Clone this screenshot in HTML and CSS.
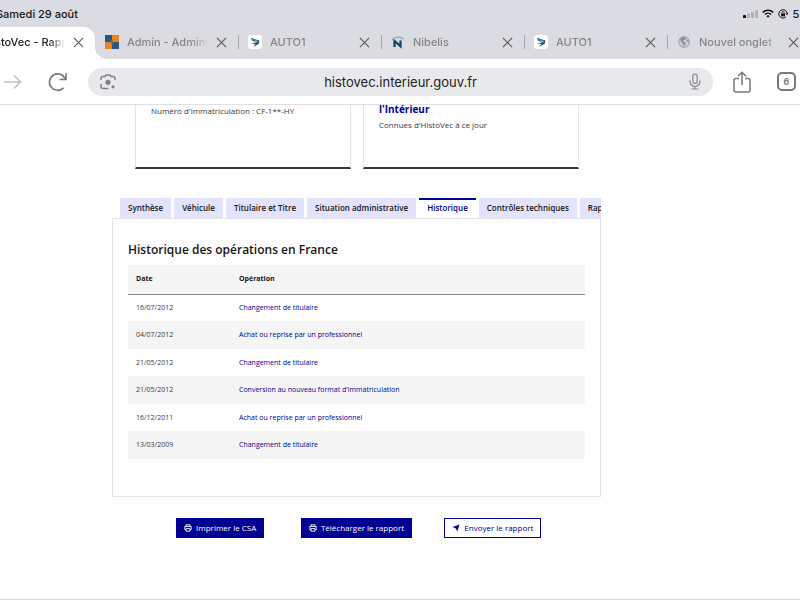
FILE: index.html
```html
<!DOCTYPE html>
<html lang="fr">
<head>
  <meta charset="UTF-8" />
  <meta name="viewport" content="width=device-width, initial-scale=1.0"/>
  <title>HistoVec - Rapport</title>
  <link rel="stylesheet" href="styles.css">
</head>
<body>
  <svg class="defs" aria-hidden="true">
    <symbol id="close" viewBox="0 0 12 12"><path d="M1 1l10 10M11 1L1 11" fill="none" stroke="#5b5c61" stroke-width="1.3"/></symbol>
    <symbol id="auto" viewBox="0 0 14 14"><rect width="14" height="14" rx="3" fill="#fff"/><path d="M3 2.500l3 1.500 5.500 1.500-1 3.500L5 12l2.500-3L3 8.500l5-1L4 5.500z" fill="#215273"/><path d="M3 3l2 2 5 1" fill="none" stroke="#3b9bd0" stroke-width=".8"/><path d="M6.500 6.300l3 .5" stroke="#fff" stroke-width=".7"/></symbol>
    <symbol id="printer" viewBox="0 0 8 8"><path d="M2 2.300V.8h4v1.500M2 5.700H.8V2.500h6.400v3.200H6M2 4.600h4v2.600H2z" fill="none" stroke="currentColor" stroke-width=".9"/></symbol>
  </svg>

  <header class="browser">
    <div class="status">
      <span>Samedi 29 août</span>
      <div class="status-icons">
        <svg width="15" height="8" viewBox="0 0 15 8"><rect y="5" width="3" height="3" rx=".6" fill="#111"/><g fill="#b3b4ba"><rect x="4" y="3.500" width="3" height="4.500" rx=".6"/><rect x="8" y="2" width="3" height="6" rx=".6"/><rect x="12" width="3" height="8" rx=".6"/></g></svg>
        <svg width="12" height="9" viewBox="0 0 12 9"><path d="M.8 3.400a7.500 7.500 0 0 1 10.400 0M2.800 5.500a4.600 4.600 0 0 1 6.400 0" fill="none" stroke="#111" stroke-width="1.500"/><path d="M6 8.800L4.300 7a2.500 2.500 0 0 1 3.400 0z" fill="#111"/></svg>
        <svg width="10" height="10" viewBox="0 0 10 10"><path d="M7.800 8A4.200 4.200 0 1 1 9.200 5M7.800 4.400l1.300 1.200L10 4" fill="none" stroke="#111"/><rect x="3" y="4.500" width="4" height="2.800" fill="#111"/><path d="M3.800 4.500v-.8a1.200 1.200 0 0 1 2.400 0v.8" fill="none" stroke="#111" stroke-width=".8"/></svg>
        <span>52</span>
      </div>
    </div>

    <div class="strip">
      <div class="tab active">
        <span class="favicon"></span>
        <span class="tab-title">HistoVec - Rapport</span>
        <button class="close" aria-label="Fermer"><svg><use href="#close"/></svg></button>
      </div>
      <div class="tab">
        <svg class="favicon" viewBox="0 0 14 14"><path d="M0 0h7v7H0zM7 7h7v7H7z" fill="#205a84"/><path d="M7 0h7v7H7zM0 7h7v7H0z" fill="#ed8424"/><path d="M5.500 5.500h3v3h-3z" fill="#8a684c"/></svg>
        <span class="tab-title">Admin - Administration</span>
        <button class="close" aria-label="Fermer"><svg><use href="#close"/></svg></button>
      </div>
      <div class="tab">
        <svg class="favicon"><use href="#auto"/></svg>
        <span class="tab-title">AUTO1</span>
        <button class="close" aria-label="Fermer"><svg><use href="#close"/></svg></button>
      </div>
      <div class="tab">
        <svg class="favicon" viewBox="0 0 14 14"><path d="M3.500 12V6l6 5.300V5.500" fill="none" stroke="#174565" stroke-width="2.300"/><path d="M1 4.800Q7-.2 12.500 4.200" fill="none" stroke="#56b8c5" stroke-width="1.300"/></svg>
        <span class="tab-title">Nibelis</span>
        <button class="close" aria-label="Fermer"><svg><use href="#close"/></svg></button>
      </div>
      <div class="tab">
        <svg class="favicon"><use href="#auto"/></svg>
        <span class="tab-title">AUTO1</span>
        <button class="close" aria-label="Fermer"><svg><use href="#close"/></svg></button>
      </div>
      <div class="tab">
        <svg class="favicon" viewBox="0 0 14 14"><circle cx="7" cy="7" r="5.300" fill="#cdd2d8" stroke="#92999f"/><path d="M3 4l3-2 3 1-1 2-2 .5 1 1.500 2 .5-1 2.500-1.500 1.500L6 8.500 4 7zM10 4l2 2-1 1-1.500-1z" fill="#8a929a"/></svg>
        <span class="tab-title">Nouvel onglet</span>
        <button class="close" aria-label="Fermer"><svg><use href="#close"/></svg></button>
      </div>
    </div>

    <div class="toolbar">
      <button class="forward" aria-label="Suivant"><svg width="18" height="16" viewBox="0 0 18 16"><path d="M0 8h16M10 1.500L16.500 8 10 14.500" fill="none" stroke="#bfc0c3" stroke-width="1.600"/></svg></button>
      <button class="reload" aria-label="Actualiser"><svg width="20" height="20" viewBox="0 0 20 20"><path d="M15.500 15.800A8.200 8.200 0 1 1 17 6.500M18 1.200v6.300h-6.300" fill="none" stroke="#77787c" stroke-width="1.700"/></svg></button>
      <div class="address">
        <svg width="16" height="16" viewBox="0 0 16 16"><path d="M1 6V4.500A2 2 0 0 1 3 2.600h2L6 1h4l1 1.600h2a2 2 0 0 1 2 1.900V6M1 10v2.500a2 2 0 0 0 2 2h5.500" fill="none" stroke="#828388" stroke-width="1.500"/><circle cx="8" cy="8.300" r="2.600" fill="#828388"/><circle cx="13" cy="12.800" r="1.600" fill="#828388"/></svg>
        <input type="text" aria-label="Adresse" value="histovec.interieur.gouv.fr">
        <svg width="12" height="17" viewBox="0 0 12 17"><path d="M6 1a2.200 2.200 0 0 1 2.200 2.200v5a2.200 2.200 0 0 1-4.400 0v-5A2.200 2.200 0 0 1 6 1zM1 7.500v1a5 5 0 0 0 10 0v-1M6 13.500V16M2.500 16h7" fill="none" stroke="#85868b" stroke-width="1.200"/></svg>
      </div>
      <button class="share" aria-label="Partager"><svg width="18" height="22" viewBox="0 0 18 22"><path d="M6 7.500H3a2 2 0 0 0-2 2V19a2 2 0 0 0 2 2h12a2 2 0 0 0 2-2V9.500a2 2 0 0 0-2-2h-3M9 14V1.500M5 5.300l4-4 4 4" fill="none" stroke="#77787c" stroke-width="1.500"/></svg></button>
      <button class="count" aria-label="6 onglets">6</button>
    </div>
  </header>

  <main class="page">
    <div class="cards">
      <div class="card">
        <p>Numéro d'immatriculation : CF-1**-HY</p>
      </div>
      <div class="card">
        <h3>l'Intérieur</h3>
        <p>Connues d'HistoVec à ce jour</p>
      </div>
    </div>

    <div class="report-tabs">
      <button>Synthèse</button>
      <button>Véhicule</button>
      <button>Titulaire et Titre</button>
      <button>Situation administrative</button>
      <button class="selected">Historique</button>
      <button>Contrôles techniques</button>
      <button>Rapport</button>
    </div>

    <section class="panel">
      <h2>Historique des opérations en France</h2>
      <table>
        <thead>
          <tr><th class="date">Date</th><th>Opération</th></tr>
        </thead>
        <tbody>
          <tr><td>16/07/2012</td><td>Changement de titulaire</td></tr>
          <tr><td>04/07/2012</td><td>Achat ou reprise par un professionnel</td></tr>
          <tr><td>21/05/2012</td><td>Changement de titulaire</td></tr>
          <tr><td>21/05/2012</td><td>Conversion au nouveau format d'immatriculation</td></tr>
          <tr><td>16/12/2011</td><td>Achat ou reprise par un professionnel</td></tr>
          <tr><td>13/03/2009</td><td>Changement de titulaire</td></tr>
        </tbody>
      </table>
    </section>

    <div class="actions">
      <button><svg width="8" height="8"><use href="#printer"/></svg>Imprimer le CSA</button>
      <button><svg width="8" height="8"><use href="#printer"/></svg>Télécharger le rapport</button>
      <button class="secondary"><svg width="8" height="8" viewBox="0 0 8 8"><path d="M7.500.5L5.300 7.500 3.900 4.600.5 3z" fill="currentColor"/></svg>Envoyer le rapport</button>
    </div>
  </main>
</body>
</html>
```

FILE: styles.css
```css
* {
  box-sizing: border-box;
}
body {
  margin: 0;
  min-height: 100vh;
  display: flex;
  flex-direction: column;
  background: #fefefe;
  color: #161616;
  font-family: "Open Sans", sans-serif;
  font-size: 8px;
  line-height: 12px;
  overflow-x: hidden;
  border-bottom: 1px solid #d9d9dc;
}
h2, h3, p {
  margin: 0;
}
button {
  border: 0;
  padding: 0;
  background: none;
  font: inherit;
  color: inherit;
}
svg {
  display: block;
  flex: none;
}
.defs {
  position: absolute;
  width: 0;
  height: 0;
}

/* browser */
.browser {
  background: #dbdce1;
  font-family: Inter, sans-serif;
  overflow: hidden;
}
.status {
  height: 27px;
  display: flex;
  justify-content: space-between;
  align-items: center;
  margin: 0 -6px 0 -4px;
  font-size: 11px;
  font-weight: 500;
}
.status-icons {
  display: flex;
  align-items: center;
  gap: 4px;
}
.strip {
  display: flex;
  height: 32px;
  margin-left: -48px;
}
.tab {
  position: relative;
  flex: 0 0 143px;
  min-width: 0;
  display: flex;
  align-items: center;
  gap: 8px;
  padding: 0 11px 2px 10px;
  color: #85868b;
  font-size: 11px;
  font-weight: 500;
}
.tab + .tab + .tab::before {
  content: "";
  position: absolute;
  left: 0;
  top: 8px;
  width: 1px;
  height: 14px;
  background: #a5a6ab;
}
.tab.active {
  background: #fff;
  color: #222;
  border-radius: 12px 12px 0 0;
}
.tab.active::after {
  content: "";
  position: absolute;
  left: 100%;
  bottom: 0;
  width: 12px;
  height: 12px;
  background: radial-gradient(circle at 100% 0, #dbdce1 12px, #fff 12px);
}
.favicon {
  flex: none;
  width: 14px;
  height: 14px;
}
.tab-title {
  flex: 1;
  min-width: 0;
  overflow: hidden;
  white-space: nowrap;
  mask-image: linear-gradient(to right, #000 80%, transparent);
}
.close svg {
  width: 11px;
  height: 11px;
}
.toolbar {
  height: 46px;
  display: flex;
  align-items: center;
  background: #fff;
  border-bottom: 1px solid #dedfe2;
  padding: 0 4px;
}
.reload {
  margin: 0 20px 0 26px;
}
.address {
  flex: 1;
  height: 28px;
  display: flex;
  align-items: center;
  padding: 0 12px;
  border-radius: 14px;
  background: #e8e9ed;
}
.address input {
  flex: 1;
  min-width: 0;
  border: 0;
  margin-right: 4px;
  background: none;
  text-align: center;
  font: 13px Inter, sans-serif;
  color: #222;
}
.share {
  margin: 0 26px 0 20px;
}
.count {
  width: 19px;
  height: 19px;
  border: 2px solid #77787c;
  border-radius: 5px;
  font-size: 9px;
  font-weight: 600;
  color: #77787c;
}

/* report */
.page {
  padding: 0 199px 0 112px;
}
.cards {
  display: grid;
  grid-template-columns: 1fr 1fr;
  gap: 12px;
  padding: 0 22px 0 23px;
}
.card {
  height: 64px;
  padding: 0 15px;
  border: solid #e4e4e4;
  border-width: 0 1px 2px;
  border-bottom-color: #3a3a3a;
  color: #3a3a3a;
}
.card h3 {
  color: #000091;
  font-size: 10px;
  line-height: 9px;
  padding-bottom: 5px;
}
.report-tabs {
  display: flex;
  gap: 3px;
  margin-top: 29px;
  padding-left: 8px;
  overflow: hidden;
}
.report-tabs button {
  flex: none;
  height: 20px;
  padding: 0 8px;
  background: #e3e3fd;
  font-weight: 600;
}
.report-tabs .selected {
  background: #fff;
  border: solid #000091;
  border-width: 2px 0 0;
  padding-bottom: 2px;
  color: #000091;
}
.panel {
  padding: 22px 15px 37px;
  border: 1px solid #e4e4e4;
}
h2 {
  font-size: 12px;
  font-weight: 600;
  line-height: 18px;
  padding-bottom: 6px;
}
table {
  width: 100%;
  border-collapse: collapse;
  font-size: 7px;
}
th, td {
  height: 27px;
  padding: 0 8px;
  text-align: left;
}
th {
  height: 29px;
  background: #f5f5f5;
  border-bottom: 1px solid #8a8a8a;
}
.date {
  width: 103px;
}
td {
  color: #3a3a3a;
}
td + td {
  color: #000091;
}
tr:nth-child(even) td {
  height: 28px;
  background: #f5f5f5;
}
.actions {
  display: grid;
  grid-template-columns: 1fr 1fr 1fr;
  justify-items: center;
  padding: 21px 40px;
}
.actions button {
  display: flex;
  align-items: center;
  gap: 4px;
  height: 20px;
  padding: 0 7px;
  border: 1px solid #000091;
  background: #000091;
  color: #fff;
  font-weight: 500;
}
.actions .secondary {
  background: #fff;
  color: #000091;
}
```
